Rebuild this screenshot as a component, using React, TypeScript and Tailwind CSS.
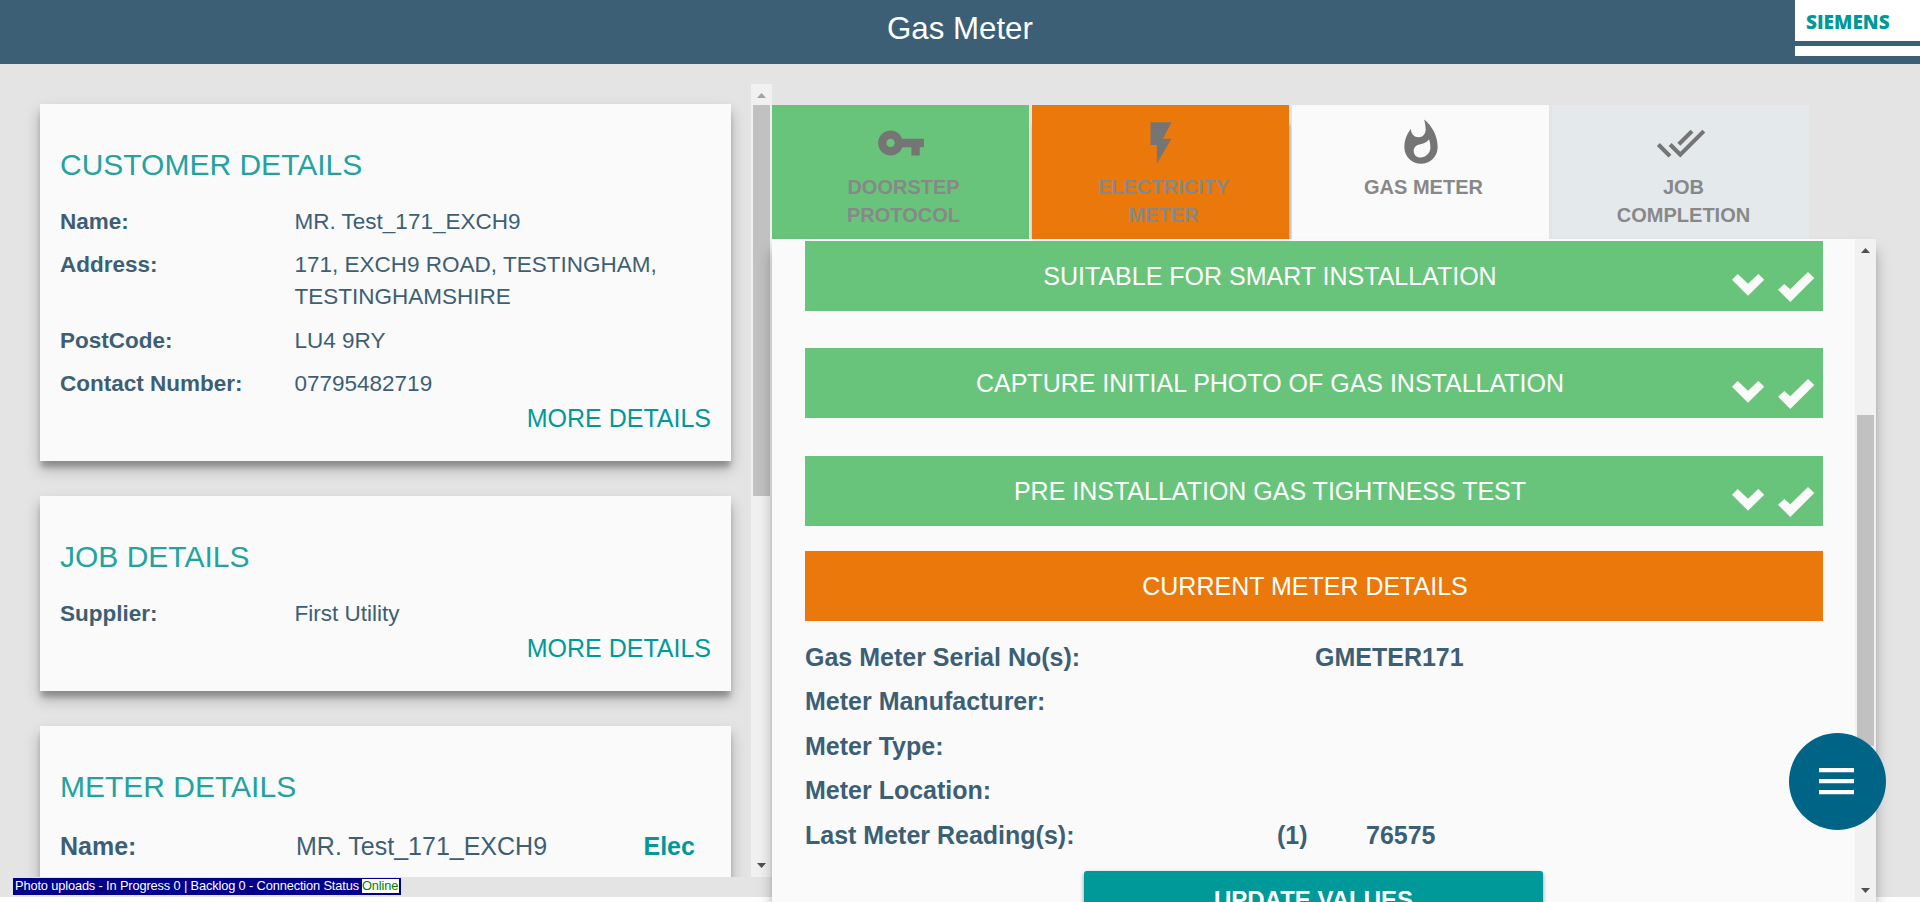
import type { ReactNode } from "react";
import { MdVpnKey, MdFlashOn, MdWhatshot, MdDoneAll } from "react-icons/md";

function Arrow({ up, className }: { up?: boolean; className: string }) {
  return (
    <svg viewBox="0 0 9 5" className={"block h-[5px] w-[9px] " + className} fill="currentColor">
      <path d={up ? "M0 5L4.5 0L9 5Z" : "M0 0L4.5 5L9 0Z"} />
    </svg>
  );
}

function Field({ label, children }: { label: string; children: ReactNode }) {
  return (
    <div className="mb-[11.4px] flex">
      <div className="w-[234.5px] shrink-0 font-bold">{label}</div>
      <div>{children}</div>
    </div>
  );
}

function Card({ title, more, className, children }: { title: string; more?: boolean; className: string; children: ReactNode }) {
  return (
    <section
      className={
        "mx-10 w-[691px] shrink-0 bg-[#fafafa] px-5 pt-[43px] text-[22.5px] leading-8 text-[#3d5f75] shadow-[0_7px_5px_-1px_rgba(0,0,0,0.22),0_8px_14px_0_rgba(0,0,0,0.25)] " +
        className
      }
    >
      <h2 className="mb-[23px] text-[30px] leading-9 text-[#22a39f]">{title}</h2>
      {children}
      {more && <div className="-mt-[9.6px] text-right text-[25px] text-[#009999]">MORE DETAILS</div>}
    </section>
  );
}

function Tab({ icon, label, className }: { icon: ReactNode; label: ReactNode; className: string }) {
  return (
    <div className={"flex h-[134px] w-[257px] flex-col items-center pt-[13px] " + className}>
      <div className="text-[50px] text-[#757575]">{icon}</div>
      <div className="mt-[5px] pl-[6px] text-center text-[20px] leading-7 font-bold text-[#888888]">{label}</div>
    </div>
  );
}

function Step({ label, className }: { label: string; className: string }) {
  return (
    <div className={"flex h-[70px] w-[1018px] bg-[#68c47a] pt-[19px] " + className}>
      <div className="w-[927px] pl-[3px] text-center text-[25px] leading-8 text-white">{label}</div>
      <svg viewBox="0 0 32.3 22" className="mt-[14px] h-[22px] w-[32.3px]" fill="#fafafa">
        <path d="M0 5.7L5.7 0L16 9.7L26.3 0L32.3 5.7L16 21.7Z" />
      </svg>
      <svg viewBox="0 0 36.3 30" className="mt-[12px] ml-[14px] h-[30px] w-[36.3px]" fill="#fafafa">
        <path d="M0 17.7L6.3 12L12.3 17.3L30 0L36.3 6L12.3 30Z" />
      </svg>
    </div>
  );
}

function Reading({ label, children }: { label: string; children?: ReactNode }) {
  return (
    <div className="flex h-[44.5px] leading-8">
      <div className="w-[472px]">{label}</div>
      {children}
    </div>
  );
}

export default function App() {
  return (
    <div className="relative h-[902px] w-[1920px] overflow-hidden bg-white font-['Liberation_Sans',Arial,sans-serif]">
      <header className="flex h-16 bg-[#3d5f75]">
        <h1 className="ml-[887px] w-[908px] pt-[11px] text-[31.25px] leading-9 text-white">Gas Meter</h1>
        <div className="flex h-14 w-[125px] flex-col bg-white">
          <div className="h-[41px] pt-[11px] pl-[11px] font-['Open_Sans',sans-serif] text-[19px] leading-[22px] font-extrabold text-[#009999]">
            SIEMENS
          </div>
          <div className="h-[5px] bg-[#3d5f75]" />
        </div>
      </header>

      <main className="flex h-[833px] bg-[#e4e4e4]">
        <div className="w-[772px] pt-5">
          <div className="flex h-[793px] overflow-hidden">
            <div className="flex w-[751px] flex-col overflow-hidden pt-5">
              <Card title="CUSTOMER DETAILS" more className="h-[357px]">
                <Field label="Name:">MR. Test_171_EXCH9</Field>
                <Field label="Address:">
                  171, EXCH9 ROAD, TESTINGHAM,
                  <br />
                  TESTINGHAMSHIRE
                </Field>
                <Field label="PostCode:">LU4 9RY</Field>
                <Field label="Contact Number:">07795482719</Field>
              </Card>
              <Card title="JOB DETAILS" more className="mt-[35px] h-[195px]">
                <Field label="Supplier:">First Utility</Field>
              </Card>
              <Card title="METER DETAILS" className="mt-[35px] h-[300px]">
                <div className="flex pt-[2px] text-[25px]">
                  <div className="w-[236px] font-bold">Name:</div>
                  <div className="w-[347.5px]">MR. Test_171_EXCH9</div>
                  <div className="font-bold text-[#009999]">Elec</div>
                </div>
              </Card>
            </div>
            <div className="flex w-[21px] flex-col items-center bg-[#f1f1f1]">
              <Arrow up className="mt-[9px] text-[#a3a3a3]" />
              <div className="mt-[7px] h-[391px] w-[17px] bg-[#c1c1c1]" />
              <Arrow className="mt-auto mb-[9px] text-[#505050]" />
            </div>
          </div>
          <div className="mt-px ml-[13px] flex h-[17px] w-[388px] bg-[#00008b] pt-px pl-[2px] text-[12.8px] leading-[14px] whitespace-nowrap text-white">
            <span className="w-[347px] tracking-[-0.13px]">Photo uploads - In Progress 0 | Backlog 0 - Connection Status</span>
            <span className="h-[14px] w-[37px] bg-white tracking-[-0.1px] text-[#008000]">Online</span>
          </div>
        </div>

        <div className="flex w-[1104px] flex-col pt-[41px]">
          <div className="flex h-[134px] shrink-0 gap-[3px]">
            <Tab icon={<MdVpnKey />} label={<>DOORSTEP<br />PROTOCOL</>} className="bg-[#68c47a]" />
            <Tab icon={<MdFlashOn />} label={<>ELECTRICITY<br />METER</>} className="bg-[#eb780a] shadow-[1px_20px_3px_0_rgba(0,0,0,0.3)]" />
            <Tab icon={<MdWhatshot />} label="GAS METER" className="bg-[#fafafa]" />
            <Tab icon={<MdDoneAll />} label={<>JOB<br />COMPLETION</>} className="bg-[#e4eaec]" />
          </div>
          <div className="relative flex h-[700px] w-[1104px] shrink-0 bg-[#fafafa] shadow-[0_8px_6px_-2px_rgba(0,0,0,0.22),0_12px_14px_0_rgba(0,0,0,0.25)]">
            <div className="w-[1083px] pt-[2px] pl-[33px]">
              <Step label="SUITABLE FOR SMART INSTALLATION" className="mb-[37px]" />
              <Step label="CAPTURE INITIAL PHOTO OF GAS INSTALLATION" className="mb-[38px]" />
              <Step label="PRE INSTALLATION GAS TIGHTNESS TEST" className="mb-[25px]" />
              <div className="h-[70px] w-[1018px] bg-[#eb780a] pt-[19px] pr-[18px] text-center text-[25px] leading-8 text-white">
                CURRENT METER DETAILS
              </div>
              <div className="pt-[19.6px] text-[25px] font-bold text-[#3d5f75]">
                <Reading label="Gas Meter Serial No(s):">
                  <span className="ml-[38px]">GMETER171</span>
                </Reading>
                <Reading label="Meter Manufacturer:" />
                <Reading label="Meter Type:" />
                <Reading label="Meter Location:" />
                <Reading label="Last Meter Reading(s):">
                  <span className="w-[89px]">(1)</span>
                  <span>76575</span>
                </Reading>
              </div>
              <button className="mt-[7.9px] ml-[279px] flex h-[60px] w-[459px] justify-center rounded-[3px] bg-[#009999] pt-[13px] text-[24px] leading-8 font-bold text-white shadow-[0_2px_4px_rgba(0,0,0,0.4)]">
                UPDATE VALUES
              </button>
            </div>
            <div className="flex h-[663px] w-[21px] flex-col items-center bg-[#f1f1f1]">
              <Arrow up className="mt-[9px] text-[#505050]" />
              <div className="mt-[162px] h-[331px] w-[17px] bg-[#c1c1c1]" />
              <Arrow className="mt-auto mb-[9px] text-[#505050]" />
            </div>
          </div>
        </div>
      </main>

      <button className="absolute top-[732.5px] left-[1788.5px] flex h-[97px] w-[97px] items-center justify-center rounded-full bg-[#006487]">
        <svg viewBox="0 0 35 27" className="mr-px h-[27px] w-[35px]" fill="white">
          <path d="M0 0H35V4.3H0ZM0 11H35V15.3H0ZM0 22H35V26.3H0Z" />
        </svg>
      </button>
    </div>
  );
}
